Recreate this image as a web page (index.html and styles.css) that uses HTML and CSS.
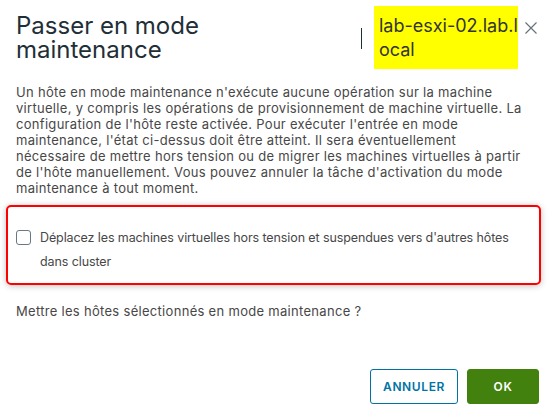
FILE: index.html
```html
<!DOCTYPE html>
<html lang="fr">
<head>
  <meta charset="UTF-8">
  <title>Passer en mode maintenance</title>
  <meta name="viewport" content="width=device-width, initial-scale=1.0" />
  <link rel="stylesheet" href="styles.css">
</head>
<body>

  <div class="modal">
    <div class="modal-header">
      <h2 class="modal-title">Passer en mode maintenance</h2>
      <span class="divider"></span>
      <div class="host-name">lab-esxi-02.lab.local</div>
      <button class="close-btn" aria-label="Fermer">
        <svg width="14" height="14" viewBox="0 0 14 14">
          <path d="M1.5 1.5 L12.5 12.5 M12.5 1.5 L1.5 12.5" stroke="#66737d" stroke-width="1.2" fill="none" />
        </svg>
      </button>
    </div>

    <div class="modal-body">
      <p class="intro">
        Un hôte en mode maintenance n'exécute aucune opération sur la machine<br>
        virtuelle, y compris les opérations de provisionnement de machine virtuelle. La<br>
        configuration de l'hôte reste activée. Pour exécuter l'entrée en mode<br>
        maintenance, l'état ci-dessus doit être atteint. Il sera éventuellement<br>
        nécessaire de mettre hors tension ou de migrer les machines virtuelles à partir<br>
        de l'hôte manuellement. Vous pouvez annuler la tâche d'activation du mode<br>
        maintenance à tout moment.
      </p>

      <div class="option-box">
        <label class="checkbox-row">
          <input type="checkbox" />
          <span>Déplacez les machines virtuelles hors tension et suspendues vers d'autres hôtes<br>dans cluster</span>
        </label>
      </div>

      <p class="question">Mettre les hôtes sélectionnés en mode maintenance ?</p>
    </div>

    <div class="modal-footer">
      <button class="cancel-btn">Annuler</button>
      <button class="ok-btn">OK</button>
    </div>
  </div>

</body>
</html>
```

FILE: styles.css
```css
body {
  margin: 0;
  background: #fff;
  font-family: 'Inter', 'Open Sans', sans-serif;
  color: #474747;
}

.modal {
  width: 555px;
  height: 417px;
  box-sizing: border-box;
  padding: 6px 14px 0 16px;
  display: flex;
  flex-direction: column;
}

.modal-header {
  display: flex;
  align-items: flex-start;
}

.modal-title {
  flex: 1;
  margin: 8px 0 0 0;
  max-width: 300px;
  font-size: 24px;
  font-weight: 400;
  line-height: 24px;
  color: #1f2f38;
}

.divider {
  width: 1px;
  height: 21px;
  background: #1f2f38;
  margin: 22px 12px 0 auto;
}

.host-name {
  width: 139px;
  background: #ffff00;
  padding: 8px 0 7px 5px;
  font-size: 18px;
  line-height: 24px;
  color: #333;
  word-break: break-all;
}

.close-btn {
  background: none;
  border: none;
  padding: 0;
  margin: 15px 3px 0 6px;
  cursor: pointer;
}

.modal-body {
  font-size: 13px;
  letter-spacing: 0.3px;
}

.intro {
  margin: 15px 0 0 0;
  line-height: 16px;
}

.option-box {
  margin: 9px 0 0 -10px;
  border: 2px solid #f00;
  border-radius: 5px;
  box-shadow: 0 1px 6px rgba(0, 0, 0, 0.25);
  padding: 19px 4px 9px 8px;
}

.checkbox-row {
  display: flex;
  align-items: flex-start;
  font-size: 12.5px;
  line-height: 24px;
  letter-spacing: -0.1px;
  white-space: nowrap;
  cursor: pointer;
}

.checkbox-row input {
  appearance: none;
  width: 15px;
  height: 15px;
  margin: 4px 9px 0 0;
  border: 1px solid #6a7883;
  border-radius: 3px;
  flex-shrink: 0;
  box-sizing: border-box;
}

.question {
  margin: 18px 0 0 0;
  line-height: 16px;
}

.modal-footer {
  display: flex;
  justify-content: flex-end;
  gap: 9px;
  margin: 50px 2px 0 0;
}

.cancel-btn,
.ok-btn {
  height: 35px;
  border-radius: 3px;
  font-family: inherit;
  font-size: 12px;
  font-weight: 600;
  letter-spacing: 0.6px;
  text-transform: uppercase;
  cursor: pointer;
}

.cancel-btn {
  width: 88px;
  background: #fff;
  border: 1px solid #0072a3;
  color: #0072a3;
}

.ok-btn {
  width: 72px;
  background: #42810e;
  border: 1px solid #42810e;
  color: #fff;
}
```
